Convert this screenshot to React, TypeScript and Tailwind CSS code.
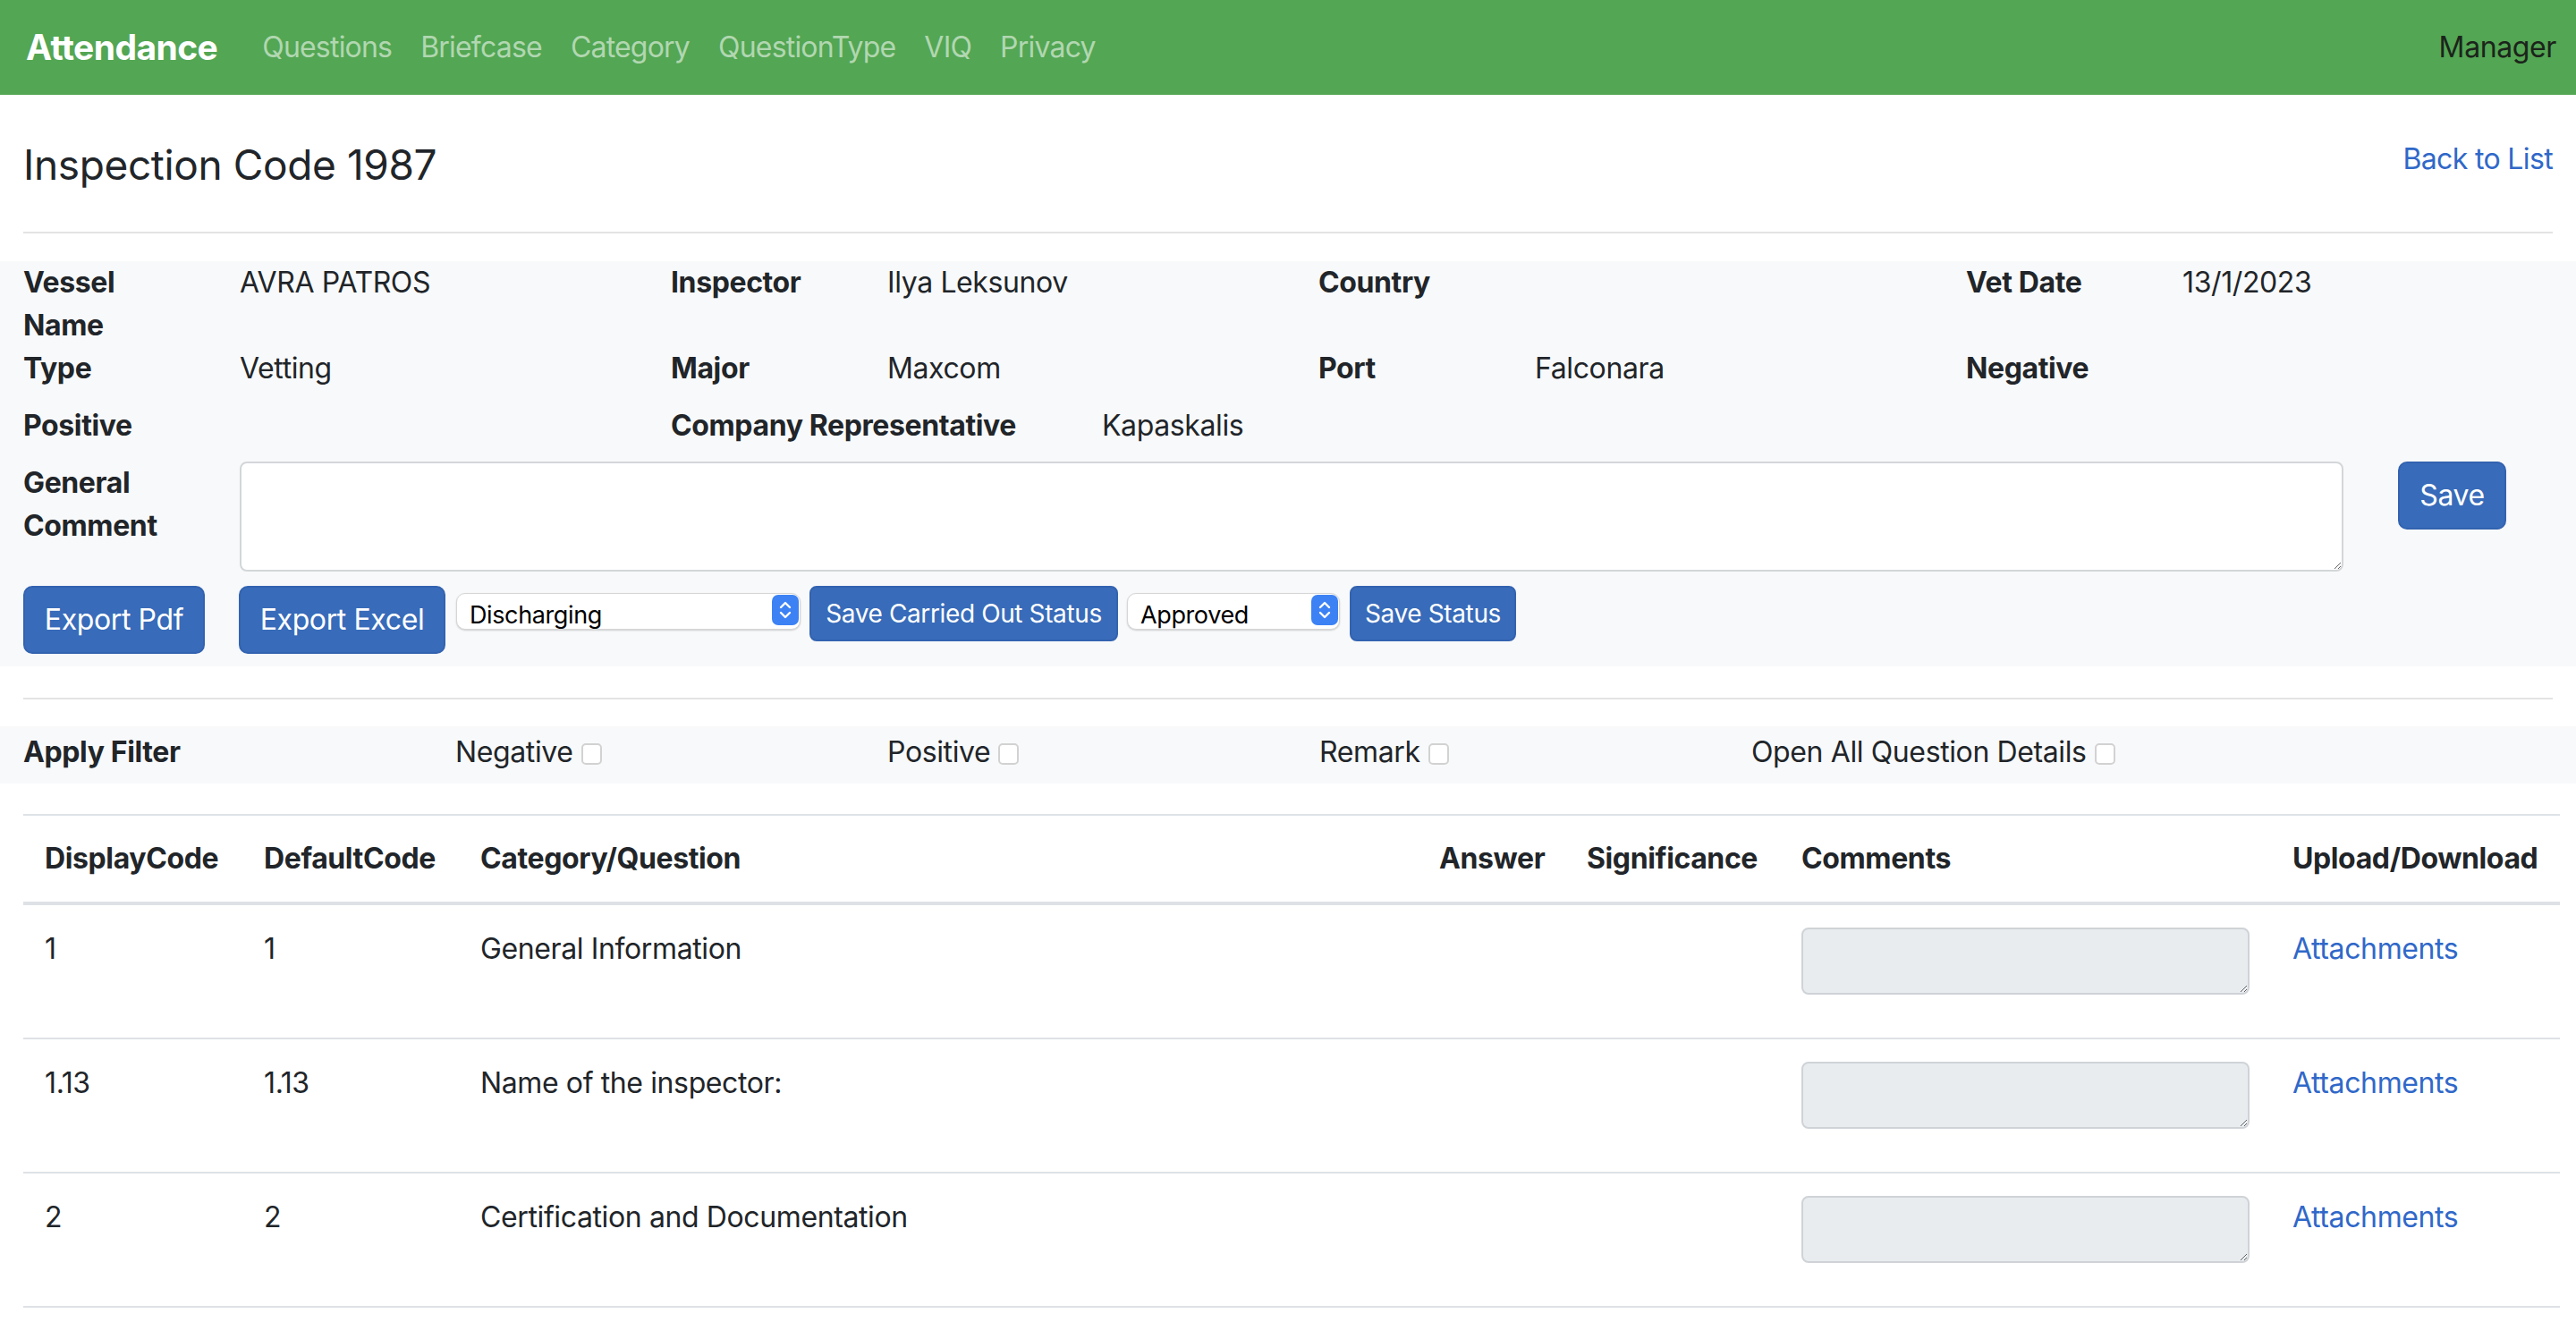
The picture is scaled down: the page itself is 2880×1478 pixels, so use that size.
import React from 'react'

const navLinks = ['Questions', 'Briefcase', 'Category', 'QuestionType', 'VIQ', 'Privacy']

const filters = ['Negative', 'Positive', 'Remark', 'Open All Question Details']

const columns = [
  { title: 'DisplayCode', width: 'w-[245px]' },
  { title: 'DefaultCode', width: 'w-[242px]' },
  { title: 'Category/Question', width: 'w-[1072px]' },
  { title: 'Answer', width: 'w-[165px]' },
  { title: 'Significance', width: 'w-[240px]' },
  { title: 'Comments', width: 'w-[549px]' },
  { title: 'Upload/Download', width: 'w-[323px]' },
]

const questions = [
  { display: '1', def: '1', text: 'General Information' },
  { display: '1.13', def: '1.13', text: 'Name of the inspector:' },
  { display: '2', def: '2', text: 'Certification and Documentation' },
]

function Field({ label, value }: { label: React.ReactNode; value?: string }) {
  return (
    <div className="flex w-[724px]">
      <div className="w-[242px] font-bold">{label}</div>
      <div className="w-[482px]">{value}</div>
    </div>
  )
}

function Stepper() {
  return (
    <svg width="30" height="34" viewBox="0 0 30 34" className="pointer-events-none absolute right-[2px] top-[3px]">
      <rect x="0" y="0" width="30" height="34" rx="7" fill="#3d82f4" />
      <path d="M10 14 L15 9 L20 14" stroke="white" strokeWidth="2.4" fill="none" strokeLinecap="round" strokeLinejoin="round" />
      <path d="M10 20 L15 25 L20 20" stroke="white" strokeWidth="2.4" fill="none" strokeLinecap="round" strokeLinejoin="round" />
    </svg>
  )
}

function NativeSelect({ value, options, width }: { value: string; options: string[]; width: string }) {
  return (
    <div className={`relative mt-[7px] h-[41px] ${width}`}>
      <select
        defaultValue={value}
        className="h-full w-full appearance-none rounded-[10px] border border-[#d6d6d6] bg-white pl-[14px] text-[27px] text-black shadow-[0_1px_2px_rgba(0,0,0,0.18)] outline-none"
      >
        {options.map((o) => (
          <option key={o}>{o}</option>
        ))}
      </select>
      <Stepper />
    </div>
  )
}

export default function App() {
  return (
    <div className="min-h-screen bg-white font-['Inter',sans-serif] text-[32px] leading-[48px] tracking-[-0.012em] text-[#212529]">
      {/* Navbar */}
      <nav className="flex h-[106px] items-center bg-[#53a653] pl-[29px] pr-[22px]">
        <span className="mr-[34px] text-[39px] font-bold tracking-[-0.015em] text-white">Attendance</span>
        <div className="flex">
          {navLinks.map((link) => (
            <a key={link} className="px-[16px] tracking-[-0.025em] text-[#b1d7b1]">
              {link}
            </a>
          ))}
        </div>
        <span className="ml-auto text-[#1b241b]">Manager</span>
      </nav>

      {/* Title */}
      <div className="px-[26px]">
        <div className="flex items-start justify-between pt-[48px]">
          <h4 className="text-[46px] leading-[60px]">Inspection Code 1987</h4>
          <a className="text-[#3068c9] tracking-[-0.02em]">Back to List</a>
        </div>
        <div className="mt-[45px] h-[2px] bg-[#e3e3e3]" />
      </div>

      {/* Inspection details */}
      <section className="mt-[31px] bg-[#f8f9fa] px-[26px] pb-[14px]">
        <div className="flex">
          <Field label={<>Vessel<br />Name</>} value="AVRA PATROS" />
          <Field label="Inspector" value="Ilya Leksunov" />
          <Field label="Country" />
          <Field label="Vet Date" value="13/1/2023" />
        </div>
        <div className="mb-4 flex">
          <Field label="Type" value="Vetting" />
          <Field label="Major" value="Maxcom" />
          <Field label="Port" value="Falconara" />
          <Field label="Negative" />
        </div>
        <div className="mb-4 flex">
          <Field label="Positive" />
          <div className="flex">
            <div className="w-[482px] font-bold">Company Representative</div>
            <div>Kapaskalis</div>
          </div>
        </div>
        <div className="mb-4 flex items-start">
          <div className="w-[242px] font-bold">General<br />Comment</div>
          <textarea className="h-[123px] w-[2352px] resize rounded-[8px] border-2 border-[#d3d6d9] bg-white" />
          <button className="ml-[61px] h-[76px] w-[121px] rounded-[10px] border-2 border-[#3363b0] bg-[#386bb9] text-white">
            Save
          </button>
        </div>
        <div className="flex items-start">
          <button className="h-[76px] w-[203px] rounded-[10px] border-2 border-[#3363b0] bg-[#386bb9] text-white">
            Export Pdf
          </button>
          <button className="ml-[38px] h-[76px] w-[231px] rounded-[10px] border-2 border-[#3363b0] bg-[#386bb9] text-white">
            Export Excel
          </button>
          <div className="ml-[12px]">
            <NativeSelect value="Discharging" options={['Discharging', 'Loading', 'Idle']} width="w-[385px]" />
          </div>
          <button className="ml-[10px] h-[62px] w-[345px] rounded-[8px] border-2 border-[#3363b0] bg-[#386bb9] text-[28px] leading-[42px] text-white">
            Save Carried Out Status
          </button>
          <div className="ml-[10px]">
            <NativeSelect value="Approved" options={['Approved', 'Pending', 'Rejected']} width="w-[238px]" />
          </div>
          <button className="ml-[11px] h-[62px] w-[186px] rounded-[8px] border-2 border-[#3363b0] bg-[#386bb9] text-[28px] leading-[42px] text-white">
            Save Status
          </button>
        </div>
      </section>

      <div className="mx-[26px] mt-[35px] h-[2px] bg-[#e3e3e3]" />

      {/* Filters */}
      <section className="mt-[30px] flex bg-[#f8f9fa] px-[26px] pb-[11px] pt-[5px]">
        <div className="w-[483px] font-bold">Apply Filter</div>
        {filters.map((f) => (
          <label key={f} className="flex w-[483px] items-center">
            {f}
            <input
              type="checkbox"
              className="ml-[9px] mt-[4px] h-[24px] w-[23px] appearance-none rounded-[5px] border-2 border-[#d2d2d2] bg-white"
            />
          </label>
        ))}
      </section>

      {/* Questions table */}
      <div className="mt-[34px] px-[26px]">
        <table className="w-full table-fixed border-separate border-spacing-0">
          <colgroup>
            {columns.map((c) => (
              <col key={c.title} className={c.width} />
            ))}
          </colgroup>
          <thead>
            <tr>
              {columns.map((c) => (
                <th
                  key={c.title}
                  className="h-[102px] border-t-2 border-b-4 border-[#dee2e6] px-[24px] text-left font-bold"
                >
                  {c.title}
                </th>
              ))}
            </tr>
          </thead>
          <tbody>
            {questions.map((q) => (
              <tr key={q.display}>
                <td className="h-[150px] border-b-2 border-[#dee2e6] px-[24px] pt-[25px] align-top">{q.display}</td>
                <td className="border-b-2 border-[#dee2e6] px-[24px] pt-[25px] align-top">{q.def}</td>
                <td className="border-b-2 border-[#dee2e6] px-[24px] pt-[25px] align-top">{q.text}</td>
                <td className="border-b-2 border-[#dee2e6] px-[24px] pt-[25px] align-top" />
                <td className="border-b-2 border-[#dee2e6] px-[24px] pt-[25px] align-top" />
                <td className="border-b-2 border-[#dee2e6] px-[24px] pt-[25px] align-top">
                  <textarea
                    disabled
                    className="block h-[75px] w-[501px] resize rounded-[8px] border-2 border-[#cfd3d7] bg-[#e9ecef]"
                  />
                </td>
                <td className="border-b-2 border-[#dee2e6] px-[24px] pt-[25px] align-top">
                  <a className="text-[#3068c9]">Attachments</a>
                </td>
              </tr>
            ))}
          </tbody>
        </table>
      </div>
    </div>
  )
}
